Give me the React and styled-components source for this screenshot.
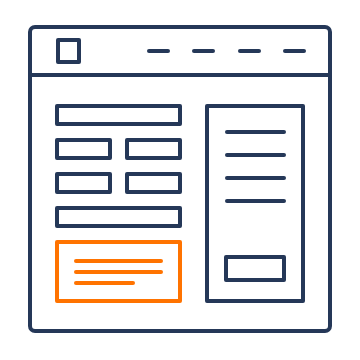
import React from 'react';
import styled, { createGlobalStyle } from 'styled-components';

const navy = '#253858';
const orange = '#ff7300';

const Global = createGlobalStyle`
  html, body {
    margin: 0;
    padding: 0;
    background: #ffffff;
  }
`;

const Page = styled.div`
  width: 360px;
  height: 360px;
  padding: 25px 0 0 28px;
  box-sizing: border-box;
`;

const Window = styled.div`
  width: 304px;
  height: 308px;
  box-sizing: border-box;
  border: 4px solid ${navy};
  border-radius: 7px;
  display: flex;
  flex-direction: column;
`;

const TitleBar = styled.div`
  height: 48px;
  box-sizing: border-box;
  border-bottom: 4px solid ${navy};
  display: flex;
  align-items: center;
  justify-content: space-between;
  padding: 0 22px 0 24px;
`;

const Square = styled.div`
  width: 25px;
  height: 26px;
  box-sizing: border-box;
  border: 4px solid ${navy};
  border-radius: 2px;
`;

const Dashes = styled.div`
  display: flex;
  gap: 22.5px;
`;

const Dash = styled.div`
  width: 23px;
  height: 4px;
  border-radius: 2px;
  background: ${navy};
`;

const Body = styled.div`
  flex: 1;
  display: flex;
  gap: 23px;
  padding: 27px 23px 26px;
`;

const FormCol = styled.div`
  width: 127px;
  display: flex;
  flex-direction: column;
  gap: 12px;
`;

const FieldRow = styled.div`
  display: flex;
  gap: 13px;
`;

const Field = styled.div`
  height: 22px;
  flex: 1;
  box-sizing: border-box;
  border: 4px solid ${navy};
  border-radius: 2px;
`;

const Note = styled.div`
  height: 63px;
  box-sizing: border-box;
  border: 4px solid ${orange};
  border-radius: 2px;
  display: flex;
  flex-direction: column;
  justify-content: center;
  gap: 7px;
  padding-left: 15px;
`;

const Line = styled.div`
  width: ${(p) => p.w}px;
  height: 4px;
  border-radius: 2px;
  background: ${(p) => p.color};
`;

const Side = styled.div`
  width: 100px;
  box-sizing: border-box;
  border: 4px solid ${navy};
  border-radius: 2px;
  display: flex;
  flex-direction: column;
  align-items: center;
  padding: 22px 0 17px;
`;

const SideLines = styled.div`
  display: flex;
  flex-direction: column;
  gap: 19px;
`;

const SideButton = styled.div`
  margin-top: auto;
  width: 62px;
  height: 27px;
  box-sizing: border-box;
  border: 4px solid ${navy};
  border-radius: 2px;
`;

export default function App() {
  return (
    <Page>
      <Global />
      <Window>
        <TitleBar>
          <Square />
          <Dashes>
            {[0, 1, 2, 3].map((i) => (
              <Dash key={i} />
            ))}
          </Dashes>
        </TitleBar>
        <Body>
          <FormCol>
            <Field />
            <FieldRow>
              <Field />
              <Field />
            </FieldRow>
            <FieldRow>
              <Field />
              <Field />
            </FieldRow>
            <Field />
            <Note>
              <Line w={89} color={orange} />
              <Line w={89} color={orange} />
              <Line w={61} color={orange} />
            </Note>
          </FormCol>
          <Side>
            <SideLines>
              {[0, 1, 2, 3].map((i) => (
                <Line key={i} w={61} color={navy} />
              ))}
            </SideLines>
            <SideButton />
          </Side>
        </Body>
      </Window>
    </Page>
  );
}
